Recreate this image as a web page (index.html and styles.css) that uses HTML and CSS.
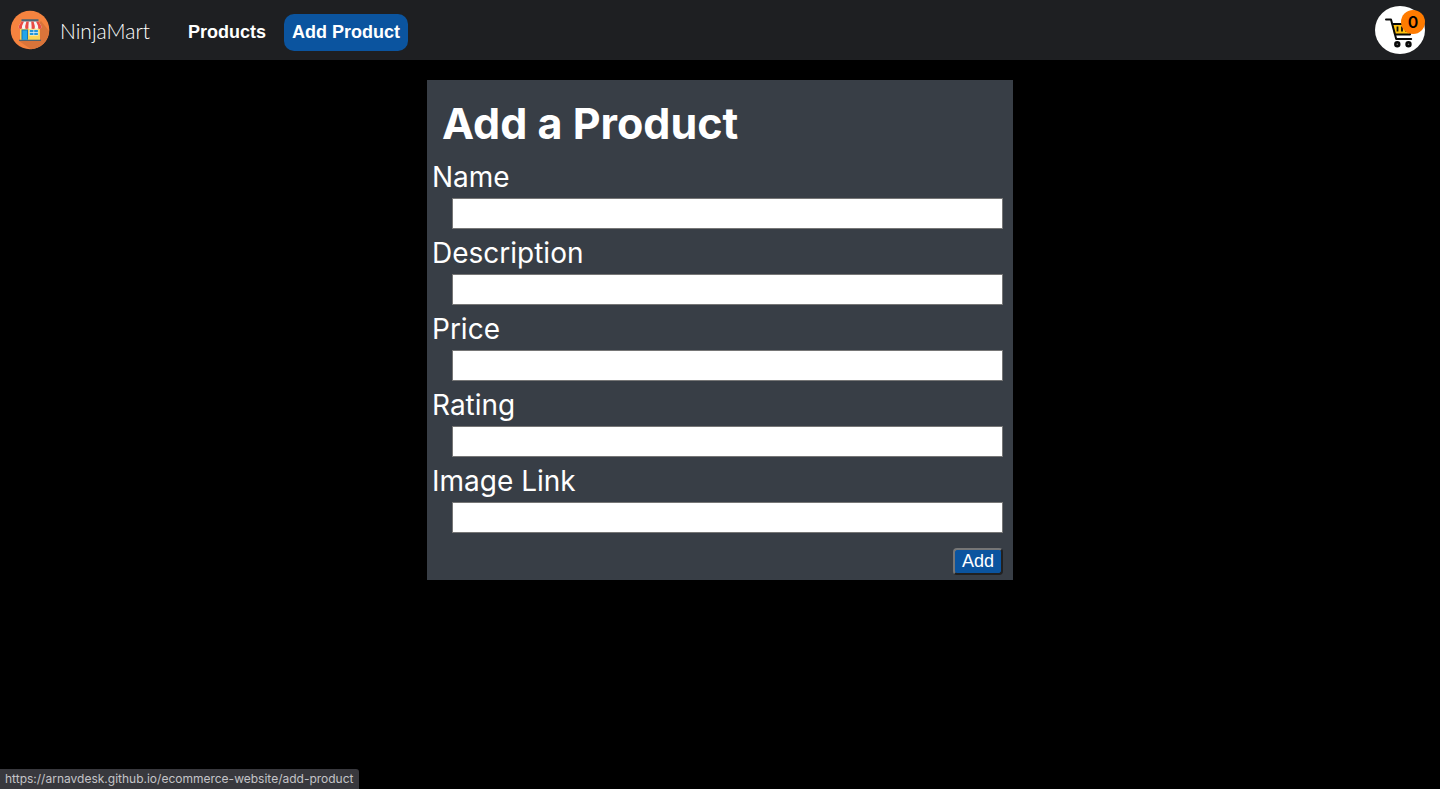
FILE: index.html
```html
<!DOCTYPE html>
<html lang="en">
<head>
<meta charset="utf-8">
<meta name="viewport" content="width=device-width, initial-scale=1">
<title>NinjaMart</title>
<link rel="stylesheet" href="styles.css">
</head>
<body>
<header class="navbar">
  <a class="brand" href="#">
    <svg class="brand-logo" viewBox="0 0 40 40" aria-hidden="true">
      <circle cx="20" cy="20" r="19.3" fill="#f5833f"/>
      <path d="M31 11 39 21A19.3 19.3 0 0 1 21 39.2L9 31z" fill="#d9743a"/>
      <path d="M10 18h20v12H10z" fill="#fbd453"/>
      <path d="M9 29.700h22V31H9z" fill="#4d6470"/>
      <path d="M11.500 19.500H18V29.700h-6.500z" fill="#1778b5"/>
      <path d="M12.500 20.500H17V29.700h-4.500z" fill="#22a5e8"/>
      <path d="M19.300 19.500h9v6h-9z" fill="#e8f4fa"/>
      <path d="M19.800 20h3.700v2.200h-3.700zM24.200 20h3.700v2.200h-3.700zM19.800 22.900h3.700V25h-3.700zM24.200 22.900h3.700V25h-3.700z" fill="#2196d8"/>
      <path d="M11.500 9.200h17V12h-17z" fill="#506571"/>
      <path d="M11.500 11.500h17l2.800 4.500v1.500a1.600 1.500 0 0 1-3.200 0 1.600 1.500 0 0 1-3.230 0 1.600 1.500 0 0 1-3.230 0 1.600 1.500 0 0 1-3.230 0 1.600 1.500 0 0 1-3.230 0 1.600 1.500 0 0 1-3.230 0 1.600 1.500 0 0 1-3.200 0V16z" fill="#f5f5f5"/>
      <path d="M11.500 11.500H14L12 16v1.500a1.600 1.500 0 0 1-3.200 0V16zM16.400 11.500h2.400l-.4 4.500v1.500a1.600 1.500 0 0 1-3.200 0V16zM21.200 11.500h2.400l1.200 4.500v1.500a1.600 1.500 0 0 1-3.200 0V16zM26 11.500h2.500l2.800 4.500v1.500a1.600 1.500 0 0 1-3.200 0V16z" fill="#e94b43"/>
    </svg>
    <span class="brand-name">NinjaMart</span>
  </a>
  <nav class="links">
    <a class="link" href="#products">Products</a>
    <a class="link link-active" href="#add-product" aria-current="page">Add Product</a>
  </nav>
  <button class="cart" type="button" aria-label="Cart">
    <svg class="cart-icon" viewBox="0 0 50 48" aria-hidden="true">
      <path d="M17 18H37L34.500 28.500H19z" fill="#ffc20e"/>
      <path d="M11 13.500h5l5.200 19.500h15M17 18H37l-2 10.500H20" fill="none" stroke="#080808" stroke-width="2" stroke-linecap="round" stroke-linejoin="round"/>
      <path d="M22.500 20.500v5M27 20.500v5M31 20.500v5" stroke="#111" stroke-width="1.800"/>
      <circle cx="22.300" cy="38.300" r="2" fill="#777" stroke="#080808" stroke-width="2.400"/>
      <circle cx="33.500" cy="38.300" r="2" fill="#777" stroke="#080808" stroke-width="2.400"/>
    </svg>
    <span class="cart-count">0</span>
  </button>
</header>
<main class="content">
  <form class="product-form">
    <h1 class="title">Add a Product</h1>
    <label class="label" for="name">Name</label>
    <input class="field" id="name" type="text">
    <label class="label" for="description">Description</label>
    <input class="field" id="description" type="text">
    <label class="label" for="price">Price</label>
    <input class="field" id="price" type="text">
    <label class="label" for="rating">Rating</label>
    <input class="field" id="rating" type="text">
    <label class="label" for="image">Image Link</label>
    <input class="field" id="image" type="text">
    <button class="submit" type="button">Add</button>
  </form>
</main>
<div class="status">https://arnavdesk.github.io/ecommerce-website/add-product</div>
</body>
</html>
```
FILE: styles.css
```css
* {
  box-sizing: border-box;
}

body {
  margin: 0;
  background: #000;
  color: #fff;
  font-family: Inter, "Open Sans", sans-serif;
}

.navbar {
  display: flex;
  align-items: center;
  height: 60px;
  padding: 0 15px 0 10px;
  background: #1e1f22;
}

.brand {
  display: flex;
  align-items: center;
  gap: 10px;
  color: #fff;
  text-decoration: none;
}

.brand-logo {
  width: 40px;
  height: 40px;
}

.brand-name {
  font-family: Lato, sans-serif;
  font-size: 21px;
  font-weight: 300;
}

.links {
  display: flex;
  gap: 10px;
  margin: 4px auto 0 30px;
}

.link {
  padding: 8px;
  border-radius: 10px;
  color: #fff;
  font: bold 18px/21px "Liberation Sans", sans-serif;
  text-decoration: none;
}

.link-active {
  background: #0b549f;
}

.cart {
  position: relative;
  width: 50px;
  height: 48px;
  padding: 0;
  border: 0;
  border-radius: 50%;
  background: #fff;
}

.cart-icon {
  display: block;
  width: 50px;
  height: 48px;
}

.cart-count {
  position: absolute;
  top: 4px;
  right: 0;
  width: 24px;
  border-radius: 12px;
  background: #ff7b00;
  color: #000;
  font: 600 16px/24px Inter, sans-serif;
  text-align: center;
}

.product-form {
  display: flex;
  flex-direction: column;
  max-width: 586px;
  margin: 20px auto;
  padding: 16px 10px 5px 5px;
  background: #383e46;
}

.title {
  margin: 0 10px 10px;
  font-size: 43px;
  font-weight: 700;
  line-height: 54px;
}

.label {
  font-size: 28px;
  line-height: 34px;
}

.field {
  height: 31px;
  margin: 4px 0 7px 20px;
  padding: 2px;
  border: 1px solid #767676;
  background: #fff;
  color: #000;
  font: 18px "Liberation Sans", sans-serif;
}

.submit {
  align-self: flex-end;
  width: 50px;
  margin-top: 8px;
  padding: 1px 0 2px;
  border: 2px outset #767676;
  border-radius: 4px;
  background: #0b549f;
  color: #fff;
  font: 18px/20px "Liberation Sans", sans-serif;
}

.status {
  position: fixed;
  bottom: 0;
  left: 0;
  padding: 0 5px;
  border-radius: 0 3px 0 0;
  background: #38383d;
  color: #c4c4c8;
  font-size: 12px;
  line-height: 20px;
}
```
